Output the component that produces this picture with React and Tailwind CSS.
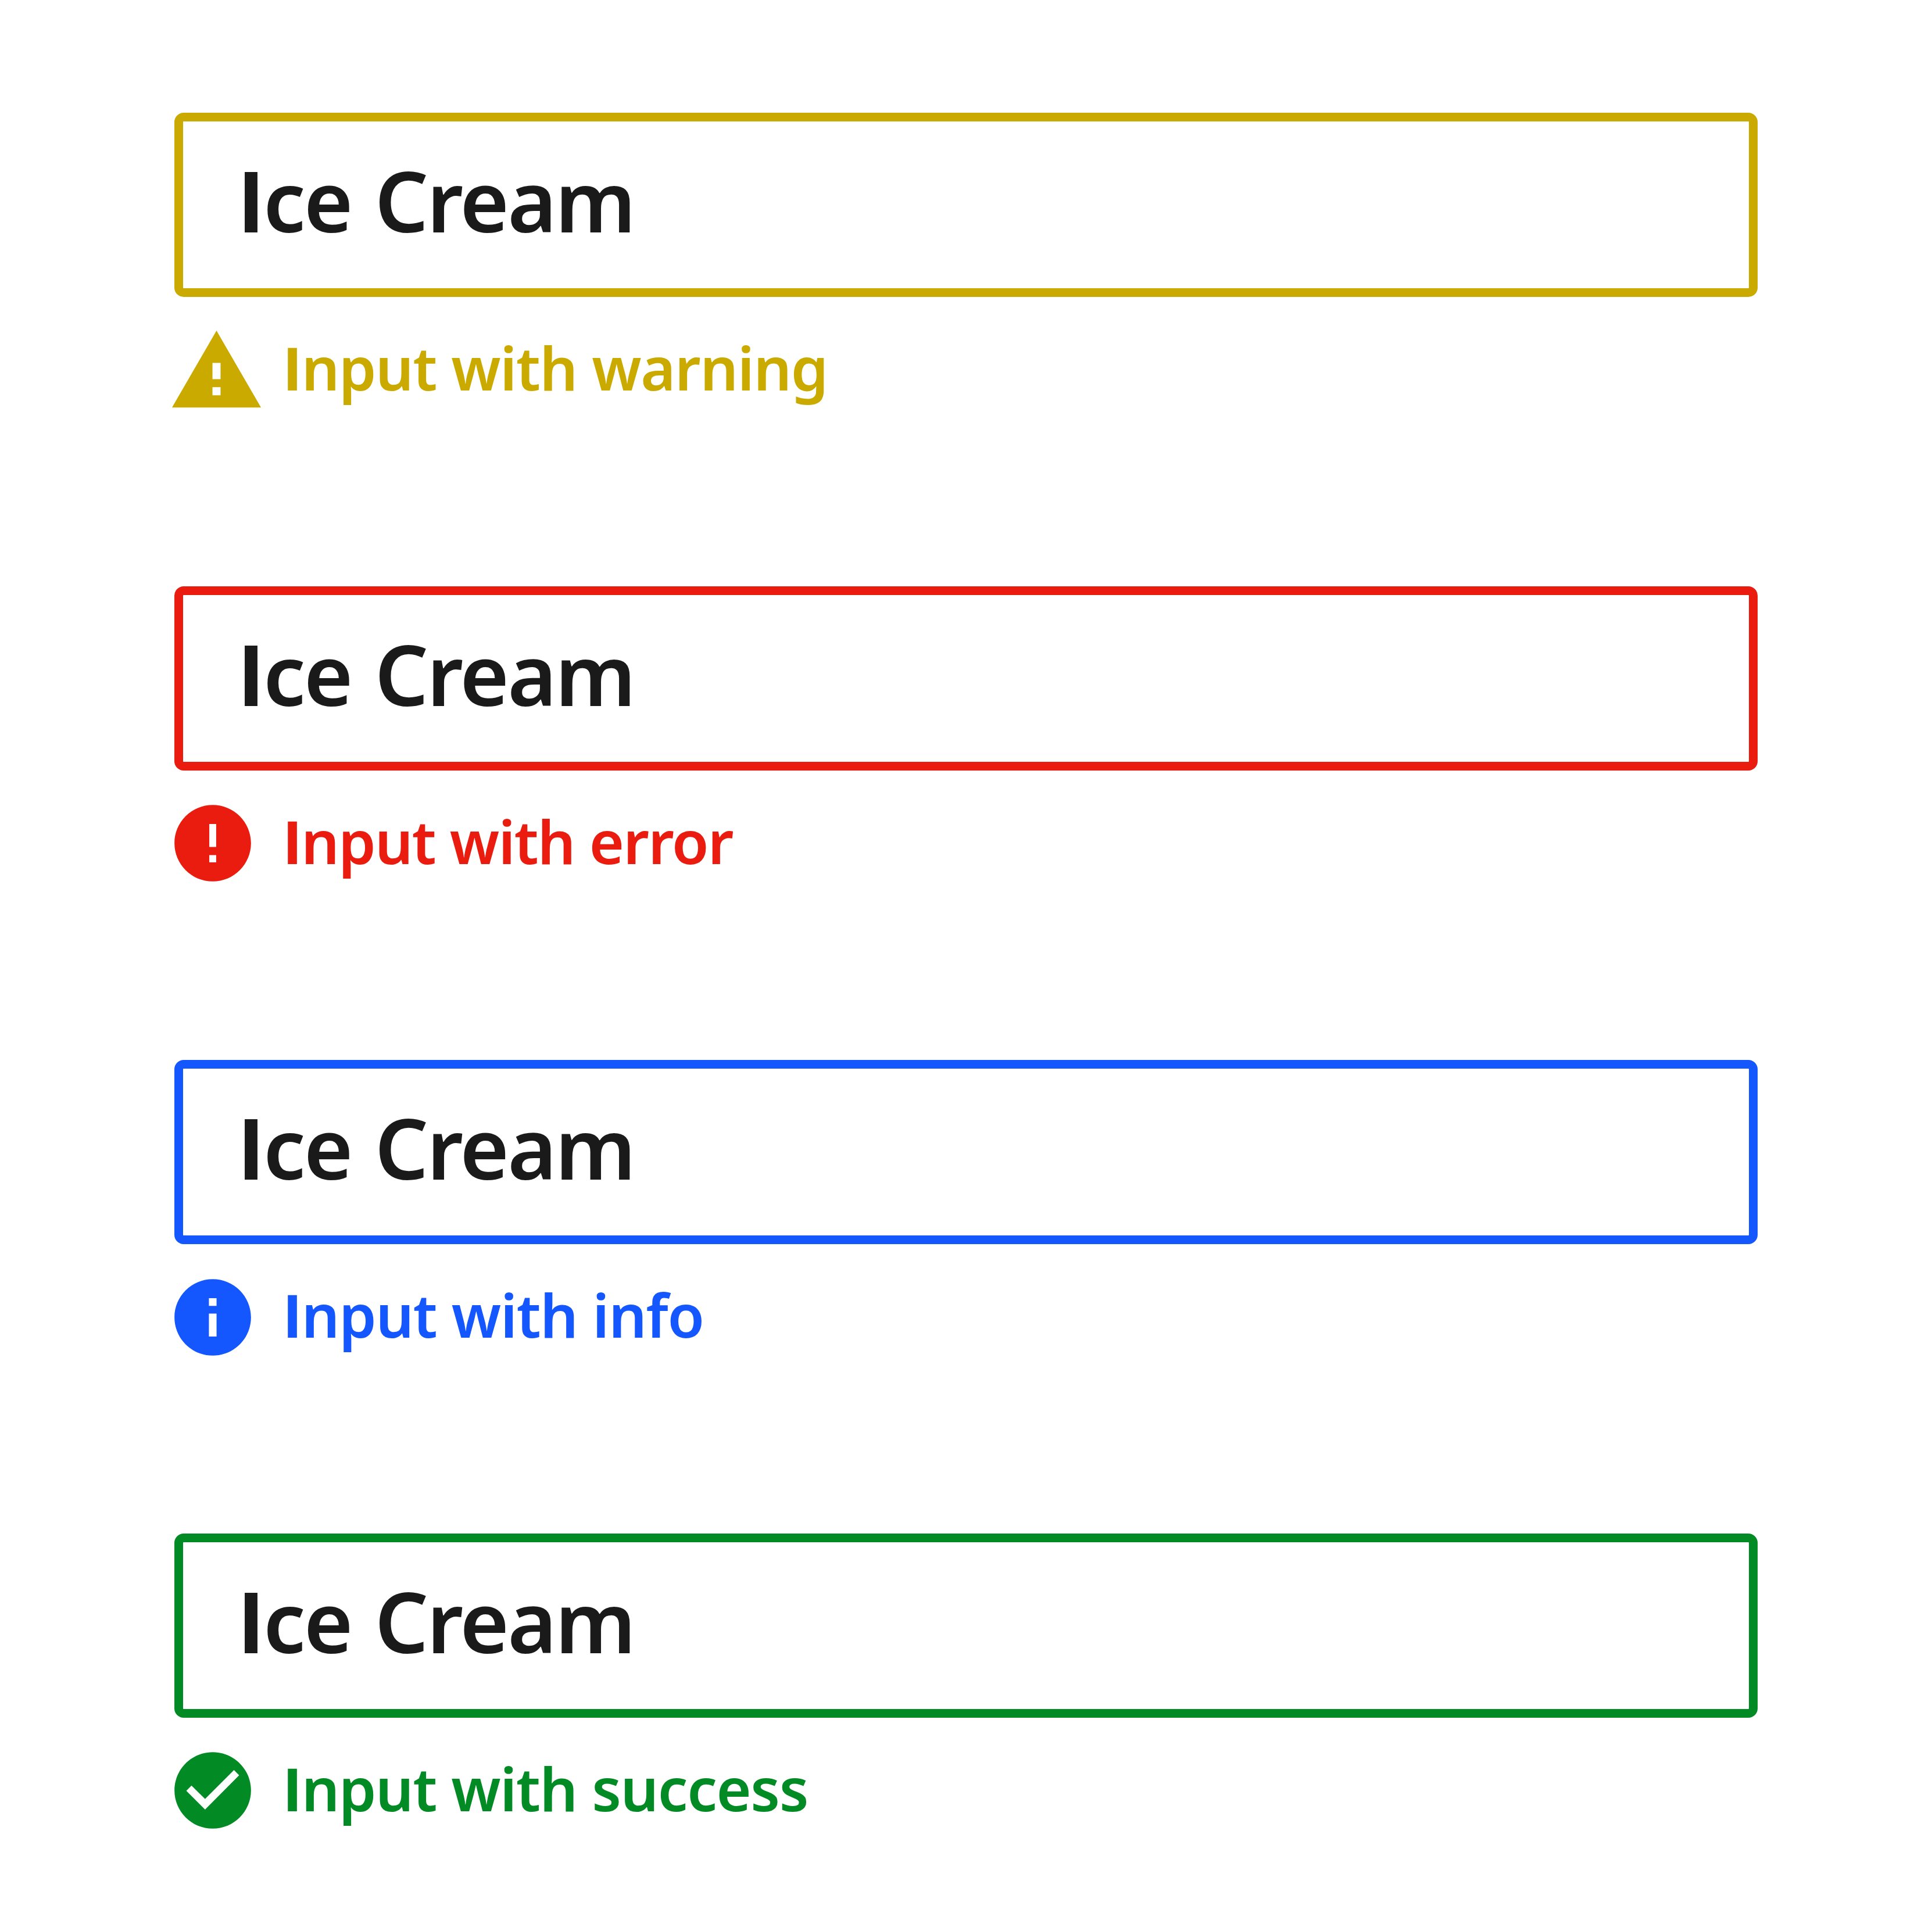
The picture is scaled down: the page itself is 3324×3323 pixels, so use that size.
const icons = {
  warning: "M1 21h22L12 2 1 21zm12-3h-2v-2h2v2zm0-4h-2v-4h2v4z",
  error: "M12 2C6.48 2 2 6.48 2 12s4.48 10 10 10 10-4.48 10-10S17.52 2 12 2zm.9 15h-1.8v-1.9h1.8V17zm0-4h-1.8V7h1.8v6z",
  info: "M12 2C6.48 2 2 6.48 2 12s4.48 10 10 10 10-4.48 10-10S17.52 2 12 2zm1 15h-2v-6h2v6zm0-8h-2V7h2v2z",
  success: "M12 2C6.48 2 2 6.48 2 12s4.48 10 10 10 10-4.48 10-10S17.52 2 12 2zm-2 15-4.9-4.9 1.35-1.35L10 14.25l7.55-7.55L18.9 8.05 10 17z",
};

const fields = [
  { kind: "warning", tone: "text-[#cbaa00] border-[#cbaa00]", iconStyle: "size-[167px] ml-[-11px] translate-y-[6px]", tracking: "tracking-[-1.4px]" },
  { kind: "error", tone: "text-[#e91c0f] border-[#e91c0f]", iconStyle: "size-[158px] ml-[-13px] translate-y-[4px]", tracking: "tracking-[-1.8px]" },
  { kind: "info", tone: "text-[#1457ff] border-[#1457ff]", iconStyle: "size-[158px] ml-[-13px] translate-y-[5px]", tracking: "tracking-[-1.3px]" },
  { kind: "success", tone: "text-[#028a25] border-[#028a25]", iconStyle: "size-[158px] ml-[-13px] translate-y-[4px]", tracking: "tracking-[-1.4px]" },
];

// Sans-serif capital I, without the crossbars of Noto Sans.
function CapitalI() {
  return <span className="font-['Open_Sans',sans-serif] leading-none font-bold">I</span>;
}

function Field({ kind, tone, iconStyle, tracking }) {
  return (
    <div className={`h-[815px] ${tone}`}>
      <div className="flex h-[317px] w-[2724px] items-center rounded-[16px] border-[15px] border-inherit pb-[17px] pl-[93px]">
        <span className="text-[145px] leading-[196px] font-[650] tracking-[-3px] [word-spacing:5.5px] whitespace-nowrap text-[#1a1a1a]">
          <CapitalI />ce Cream
        </span>
      </div>
      <div className="mt-[41px] flex h-[160px] items-center">
        <div className="w-[186px] shrink-0">
          <svg viewBox="0 0 24 24" className={`block ${iconStyle}`} fill="currentColor">
            <path d={icons[kind]} />
          </svg>
        </div>
        <span className={`text-[103px] leading-[144px] font-[650] whitespace-nowrap ${tracking}`}>
          <CapitalI />nput with {kind}
        </span>
      </div>
    </div>
  );
}

export default function App() {
  return (
    <main className="h-[3323px] w-[3324px] overflow-hidden bg-white pt-[194px] pl-[300px] font-['Noto_Sans',sans-serif]">
      {fields.map((f) => (
        <Field key={f.kind} {...f} />
      ))}
    </main>
  );
}
